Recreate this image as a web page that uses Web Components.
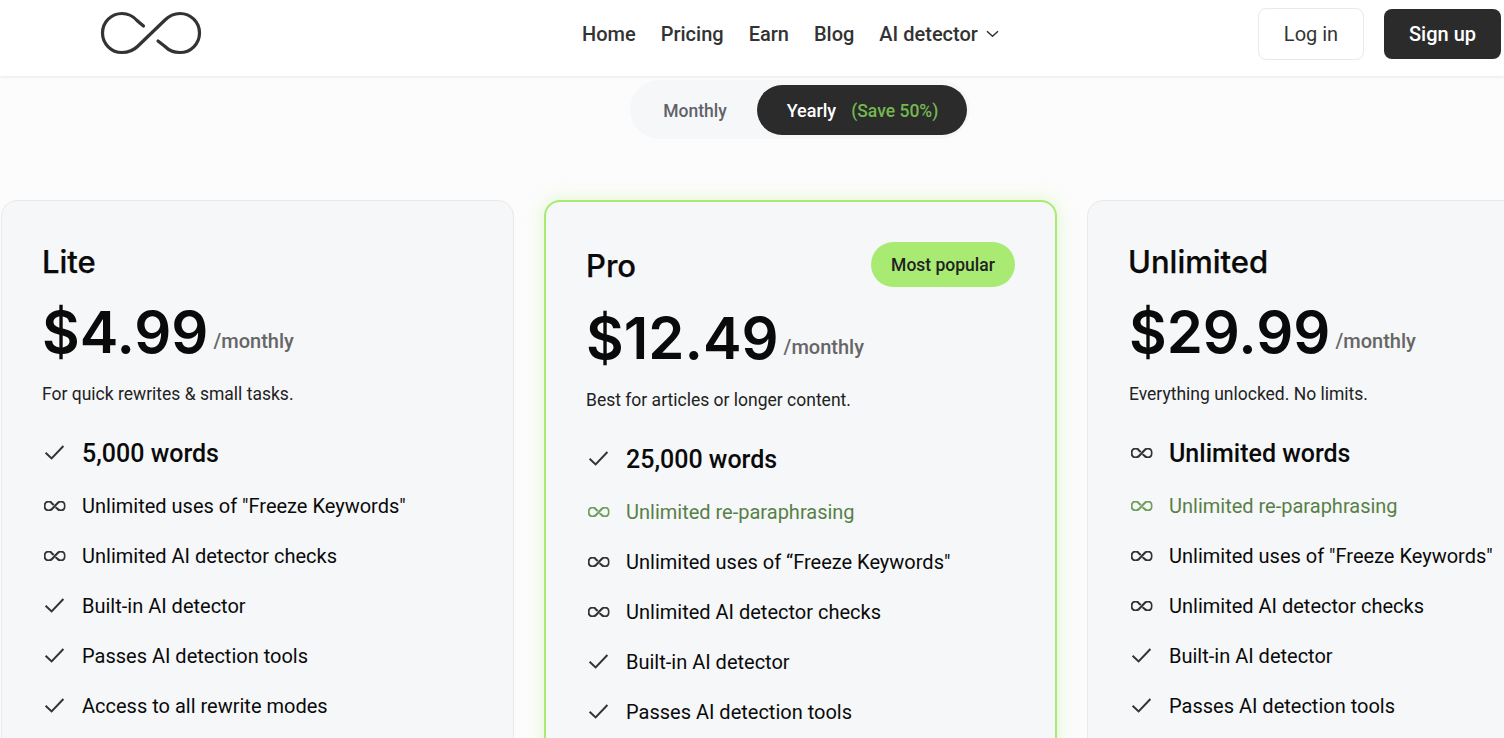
<!DOCTYPE html>
<html lang="en"><head><meta charset="utf-8"><title>Pricing</title>
<style>
html,body{margin:0;padding:0;height:738px;overflow:hidden;background:#fcfcfc;font-family:Roboto,"Liberation Sans",sans-serif}
.cards{display:flex;gap:30px;margin:61px 0 0 1px;width:1700px}
</style></head><body>
<template id="t-header"><style>
:host{display:flex;align-items:center;height:76px;box-sizing:border-box;background:#fff;box-shadow:0 1px 3px rgba(0,0,0,.08);padding:0 0 8px 100px;position:relative;z-index:2;color:#333}
.logo{display:block;width:102px;height:44px;margin-top:-2px}
nav{display:flex;align-items:center;gap:25px;margin-left:380px;font-size:20px;font-weight:500}
.dd{display:flex;align-items:center;gap:8px}
.end{margin-left:auto;display:flex;align-items:center;gap:20px;padding-right:3px}
.b{display:flex;align-items:center;justify-content:center;box-sizing:border-box;border-radius:8px;font-size:20px}
.login{width:106px;height:52px;border:1px solid #e9e9e9}
.signup{width:117px;height:50px;background:#2b2b2b;color:#fff;font-weight:500}
</style>
<svg class="logo" viewBox="100 11 102 44" fill="none" stroke="#333" stroke-width="3.2" stroke-linecap="round"><path d="M143.5 26 L137 20.5 C133 16 128 13.5 122 13.5 A19.5 19.5 0 0 0 122 52.5 C128 52.5 134 50 138 46 L165 20 C169 16 174 13.5 180 13.5 A19.5 19.5 0 0 1 180 52.5 C174 52.5 169 50.5 165 46.5 L158 41"/></svg>
<nav><span>Home</span><span>Pricing</span><span>Earn</span><span>Blog</span><span class="dd">AI detector <svg width="13" height="8" viewBox="0 0 13 8" fill="none" stroke="#333" stroke-width="1.5"><path d="M1 1.2l5.5 5 5.5-5"/></svg></span></nav>
<div class="end"><div class="b login">Log in</div><div class="b signup">Sign up</div></div>
</template>

<template id="t-toggle"><style>
:host{display:flex;width:340px;height:59px;margin:4px auto 0 630px;box-sizing:border-box;background:#f6f7f9;border-radius:30px;align-items:center;padding:3px 3px 0 0;font-size:17.5px;font-weight:500}
.m{width:130px;text-align:center;color:#5f6368}
.y{flex:none;width:210px;height:50px;margin-left:-3px;margin-top:-3px;border-radius:25px;background:#2b2b2b;color:#fff;display:flex;align-items:center;justify-content:center;gap:15px;padding:2px 0 0 1px;box-sizing:border-box}
.y span:first-child{font-size:18px}
.s{color:#73b84f}
</style><span class="m">Monthly</span><div class="y"><span>Yearly</span><span class="s">(Save 50%)</span></div></template>

<template id="t-card"><style>
:host{display:block;flex:none;width:513px;height:640px;box-sizing:border-box;background:#f6f7f9;border:1px solid #e8e9eb;border-radius:16px;padding:41px 40px 0}
:host([featured]){border:2px solid #a9ea72;padding:40px 40px 0;box-shadow:0 0 18px rgba(169,234,114,.35)}
:host(:last-child){padding-left:41px}
.top{display:flex;align-items:center;justify-content:space-between;min-height:39px}
h2{margin:0;font:500 31px/38px Inter,Roboto,sans-serif;color:#0a0a0a;-webkit-text-stroke:.25px #0a0a0a}
:host([featured]) h2{padding-top:2px;line-height:36px}
:host(:last-child) h2{margin-left:-1px}
.p{margin-top:6px;height:86px;line-height:90px;white-space:nowrap}
.a{font:600 58px/90px Inter,Roboto,sans-serif;color:#0a0a0a}
.u{font-size:20px;font-weight:500;color:#666;margin-left:5px;vertical-align:5px}
.d{font-size:17.5px;line-height:24px;color:#222;margin-top:9px}
.l{margin-top:19px}
</style><div class="top"><h2 part="name"></h2><slot name="badge"></slot></div>
<div class="p"><span class="a"></span><span class="u">/monthly</span></div><div class="d"></div><div class="l"><slot></slot></div></template>

<template id="t-badge"><style>
:host{display:flex;align-items:center;justify-content:center;width:144px;height:45px;border-radius:23px;background:#a9ea72;color:#222;font-size:17.5px;font-weight:500}
</style><slot></slot></template>

<template id="t-feat"><style>
:host{display:flex;align-items:center;gap:16px;height:50px;font-size:20px;color:#0a0a0a}
:host([big]){height:56px;font-size:25px;font-weight:500}
:host([green]){color:#587f48}
#i{flex:none;display:block;width:24px;height:24px;color:#333}
:host([green]) #i{color:#6f9f5a}
#i>svg{display:block;width:24px;height:24px}
</style><span id="i"></span><span><slot></slot></span></template>

<script>
const INF='<svg viewBox="0 0 24 24"><svg x="2" y="7" width="21.5" height="10" viewBox="100 11 102 44" preserveAspectRatio="none" fill="none" stroke="currentColor" stroke-linecap="round"><path vector-effect="non-scaling-stroke" stroke-width="2.1" d="M143.5 26 L137 20.5 C133 16 128 13.5 122 13.5 A19.5 19.5 0 0 0 122 52.5 C128 52.5 134 50 138 46 L165 20 C169 16 174 13.5 180 13.5 A19.5 19.5 0 0 1 180 52.5 C174 52.5 169 50.5 165 46.5 L158 41"/></svg></svg>';
const CHK='<svg viewBox="0 0 24 24" fill="none" stroke="currentColor" stroke-width="2"><path d="M3.6 11.8 L9.6 17.4 L21.4 5"/></svg>';
function def(tag,tpl,init){customElements.define(tag,class extends HTMLElement{constructor(){super();const r=this.attachShadow({mode:'open'});r.appendChild(document.getElementById(tpl).content.cloneNode(true));}connectedCallback(){init&&init(this,this.shadowRoot)}})}
def('site-header','t-header');
def('bill-toggle','t-toggle');
def('most-badge','t-badge');
def('plan-card','t-card',(h,r)=>{r.querySelector('h2').textContent=h.getAttribute('name');r.querySelector('.a').textContent=h.getAttribute('price');r.querySelector('.d').textContent=h.getAttribute('desc')});
def('plan-feat','t-feat',(h,r)=>{r.getElementById('i').innerHTML=h.getAttribute('icon')==='inf'?INF:CHK});
</script>

<site-header></site-header>
<bill-toggle></bill-toggle>
<div class="cards">
<plan-card name="Lite" price="$4.99" desc="For quick rewrites &amp; small tasks.">
<plan-feat icon="chk" big>5,000 words</plan-feat>
<plan-feat icon="inf">Unlimited uses of "Freeze Keywords"</plan-feat>
<plan-feat icon="inf">Unlimited AI detector checks</plan-feat>
<plan-feat icon="chk">Built-in AI detector</plan-feat>
<plan-feat icon="chk">Passes AI detection tools</plan-feat>
<plan-feat icon="chk">Access to all rewrite modes</plan-feat>
</plan-card>
<plan-card featured name="Pro" price="$12.49" desc="Best for articles or longer content.">
<most-badge slot="badge">Most popular</most-badge>
<plan-feat icon="chk" big>25,000 words</plan-feat>
<plan-feat icon="inf" green>Unlimited re-paraphrasing</plan-feat>
<plan-feat icon="inf">Unlimited uses of “Freeze Keywords"</plan-feat>
<plan-feat icon="inf">Unlimited AI detector checks</plan-feat>
<plan-feat icon="chk">Built-in AI detector</plan-feat>
<plan-feat icon="chk">Passes AI detection tools</plan-feat>
</plan-card>
<plan-card name="Unlimited" price="$29.99" desc="Everything unlocked. No limits.">
<plan-feat icon="inf" big>Unlimited words</plan-feat>
<plan-feat icon="inf" green>Unlimited re-paraphrasing</plan-feat>
<plan-feat icon="inf">Unlimited uses of "Freeze Keywords"</plan-feat>
<plan-feat icon="inf">Unlimited AI detector checks</plan-feat>
<plan-feat icon="chk">Built-in AI detector</plan-feat>
<plan-feat icon="chk">Passes AI detection tools</plan-feat>
</plan-card>
</div>
</body></html>
